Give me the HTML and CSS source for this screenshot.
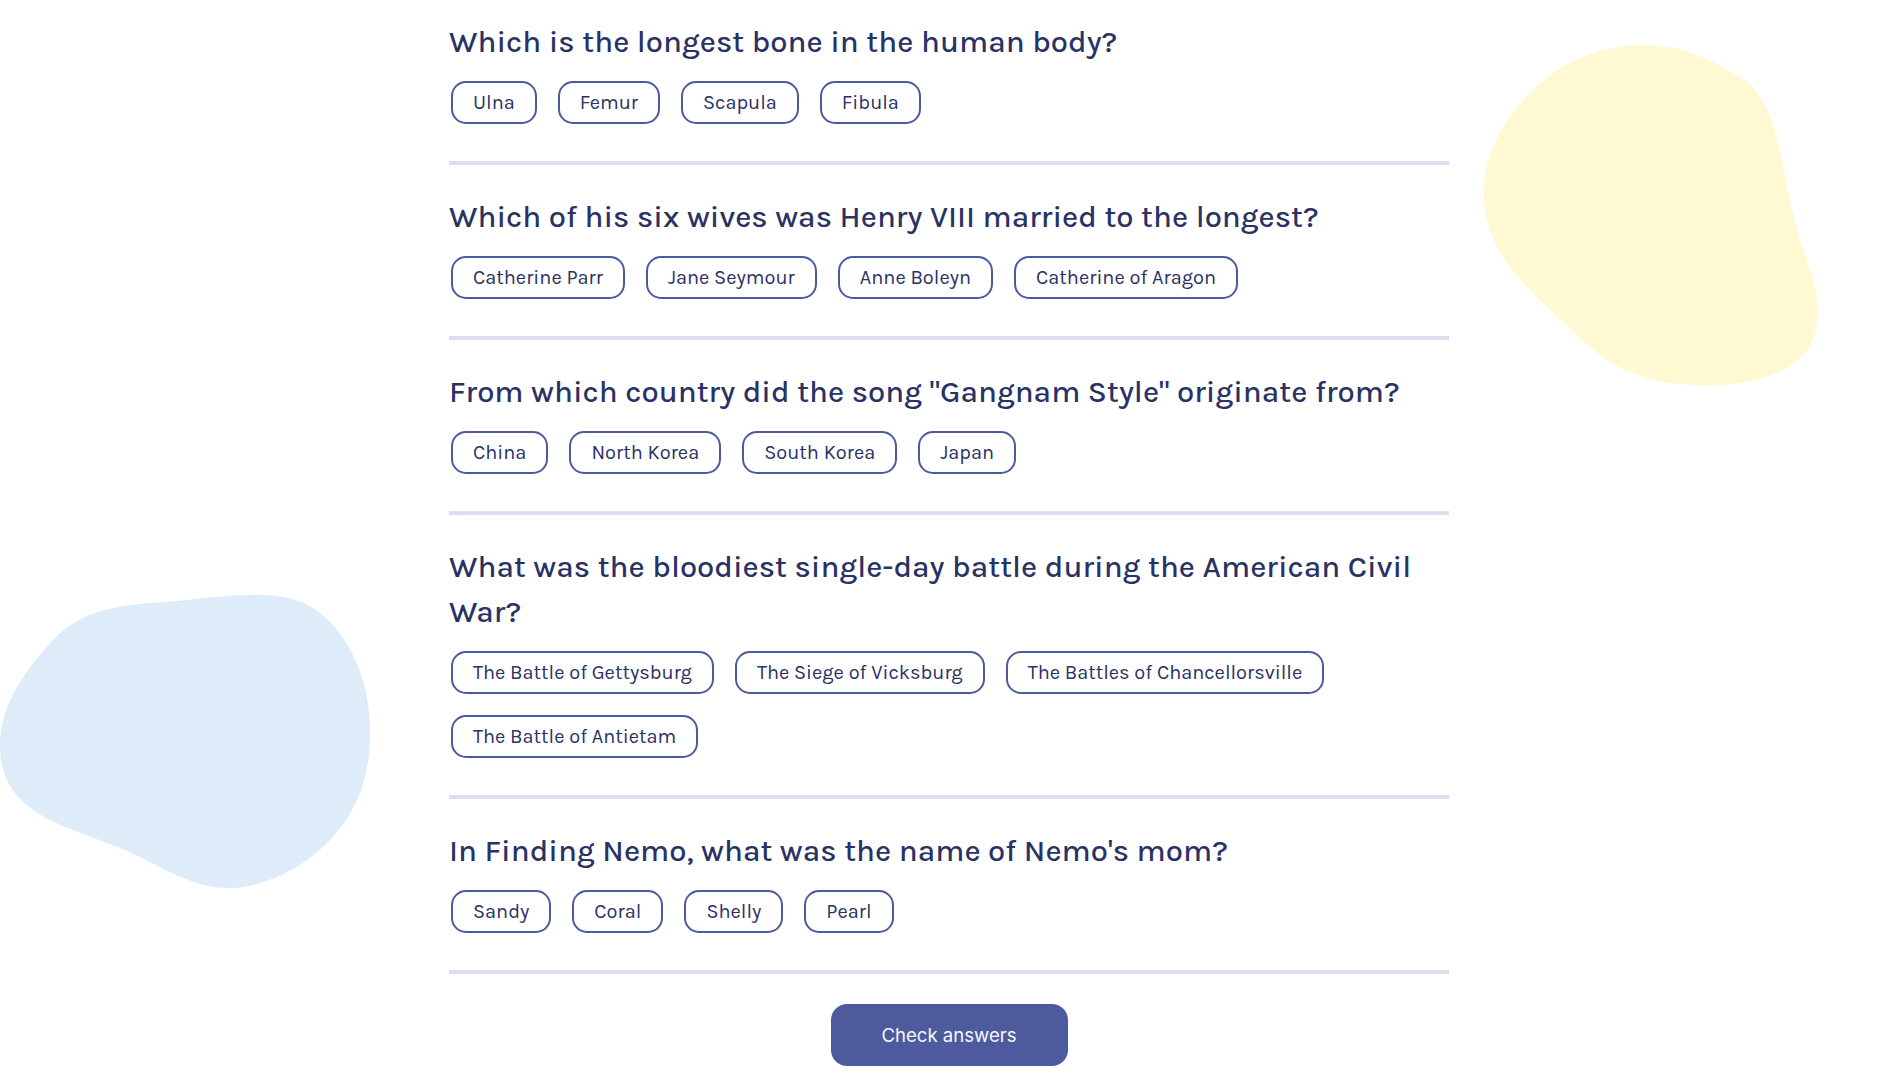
FILE: index.html
```html
<!DOCTYPE html>
<html lang="en">
<head>
<meta charset="utf-8">
<title>Quizzical</title>
<link rel="stylesheet" href="styles.css">
</head>
<body>
<svg class="blob blob-yellow" width="370" height="370" viewBox="0 0 370 370" aria-hidden="true"><path d="M160 15 C200 14 235 30 267 52 C290 70 298 110 305 145 C312 185 320 210 330 240 C338 265 342 290 332 312 C315 345 270 357 217 355 C185 354 165 350 135 335 C110 320 90 298 67 277 C40 250 8 222 4 170 C2 130 20 95 45 68 C75 35 115 16 160 15 Z"/></svg>
<svg class="blob blob-blue" width="390" height="320" viewBox="0 0 390 320" aria-hidden="true"><path d="M257 15 C290 15 310 22 330 42 C355 68 372 110 370 160 C368 215 345 255 300 285 C275 300 250 308 228 308 C200 308 175 295 140 277 C110 262 80 255 50 240 C15 222 0 200 0 165 C0 125 25 90 55 58 C85 28 120 25 177 21 C205 18 230 15 257 15 Z"/></svg>

<main class="quiz">
  <section class="question">
    <h2 class="question-title">Which is the longest bone in the human body?</h2>
    <div class="options">
      <button class="option">Ulna</button>
      <button class="option">Femur</button>
      <button class="option">Scapula</button>
      <button class="option">Fibula</button>
    </div>
  </section>
  <section class="question">
    <h2 class="question-title">Which of his six wives was Henry VIII married to the longest?</h2>
    <div class="options">
      <button class="option">Catherine Parr</button>
      <button class="option">Jane Seymour</button>
      <button class="option">Anne Boleyn</button>
      <button class="option">Catherine of Aragon</button>
    </div>
  </section>
  <section class="question">
    <h2 class="question-title">From which country did the song "Gangnam Style" originate from?</h2>
    <div class="options">
      <button class="option">China</button>
      <button class="option">North Korea</button>
      <button class="option">South Korea</button>
      <button class="option">Japan</button>
    </div>
  </section>
  <section class="question">
    <h2 class="question-title">What was the bloodiest single-day battle during the American Civil War?</h2>
    <div class="options">
      <button class="option">The Battle of Gettysburg</button>
      <button class="option">The Siege of Vicksburg</button>
      <button class="option">The Battles of Chancellorsville</button>
      <button class="option">The Battle of Antietam</button>
    </div>
  </section>
  <section class="question">
    <h2 class="question-title">In Finding Nemo, what was the name of Nemo's mom?</h2>
    <div class="options">
      <button class="option">Sandy</button>
      <button class="option">Coral</button>
      <button class="option">Shelly</button>
      <button class="option">Pearl</button>
    </div>
  </section>
  <button class="check-btn">Check answers</button>
</main>
</body>
</html>
```

FILE: styles.css
```css
* { box-sizing: border-box; }

html, body {
  margin: 0;
  padding: 0;
  background: #ffffff;
}

body {
  position: relative;
  min-height: 1086px;
  overflow: hidden;
  font-family: "Karla", "Inter", "Liberation Sans", sans-serif;
  color: #293264;
}

.blob {
  position: absolute;
  z-index: 0;
}

.blob-yellow {
  left: 1480px;
  top: 30px;
  fill: #fff9d3;
}

.blob-blue {
  left: 0;
  top: 580px;
  fill: #deebf8;
}

.quiz {
  position: relative;
  z-index: 1;
  width: 1000px;
  margin: 0 auto;
  padding-bottom: 20px;
}

.question {
  padding: 30px 0 37px;
  border-bottom: 4px solid #dbdef0;
}

.question:first-child {
  padding-top: 20px;
}

.question-title {
  margin: 0 0 16px;
  font-size: 31px;
  line-height: 45px;
  font-weight: 500;
  color: #293264;
}

.options {
  display: flex;
  flex-wrap: wrap;
  gap: 21px;
  padding-left: 2px;
}

.option {
  font-family: inherit;
  font-size: 20px;
  line-height: 23px;
  padding: 8px 20px;
  border: 2px solid #4d5b9e;
  border-radius: 15px;
  background: transparent;
  color: #293264;
}

.check-btn {
  display: block;
  margin: 30px auto 0;
  width: 237px;
  height: 62px;
  padding: 0;
  border: none;
  border-radius: 16px;
  background: #4d5b9e;
  color: #f5f7fb;
  font-family: "Inter", sans-serif;
  font-size: 18.6px;
}
```
